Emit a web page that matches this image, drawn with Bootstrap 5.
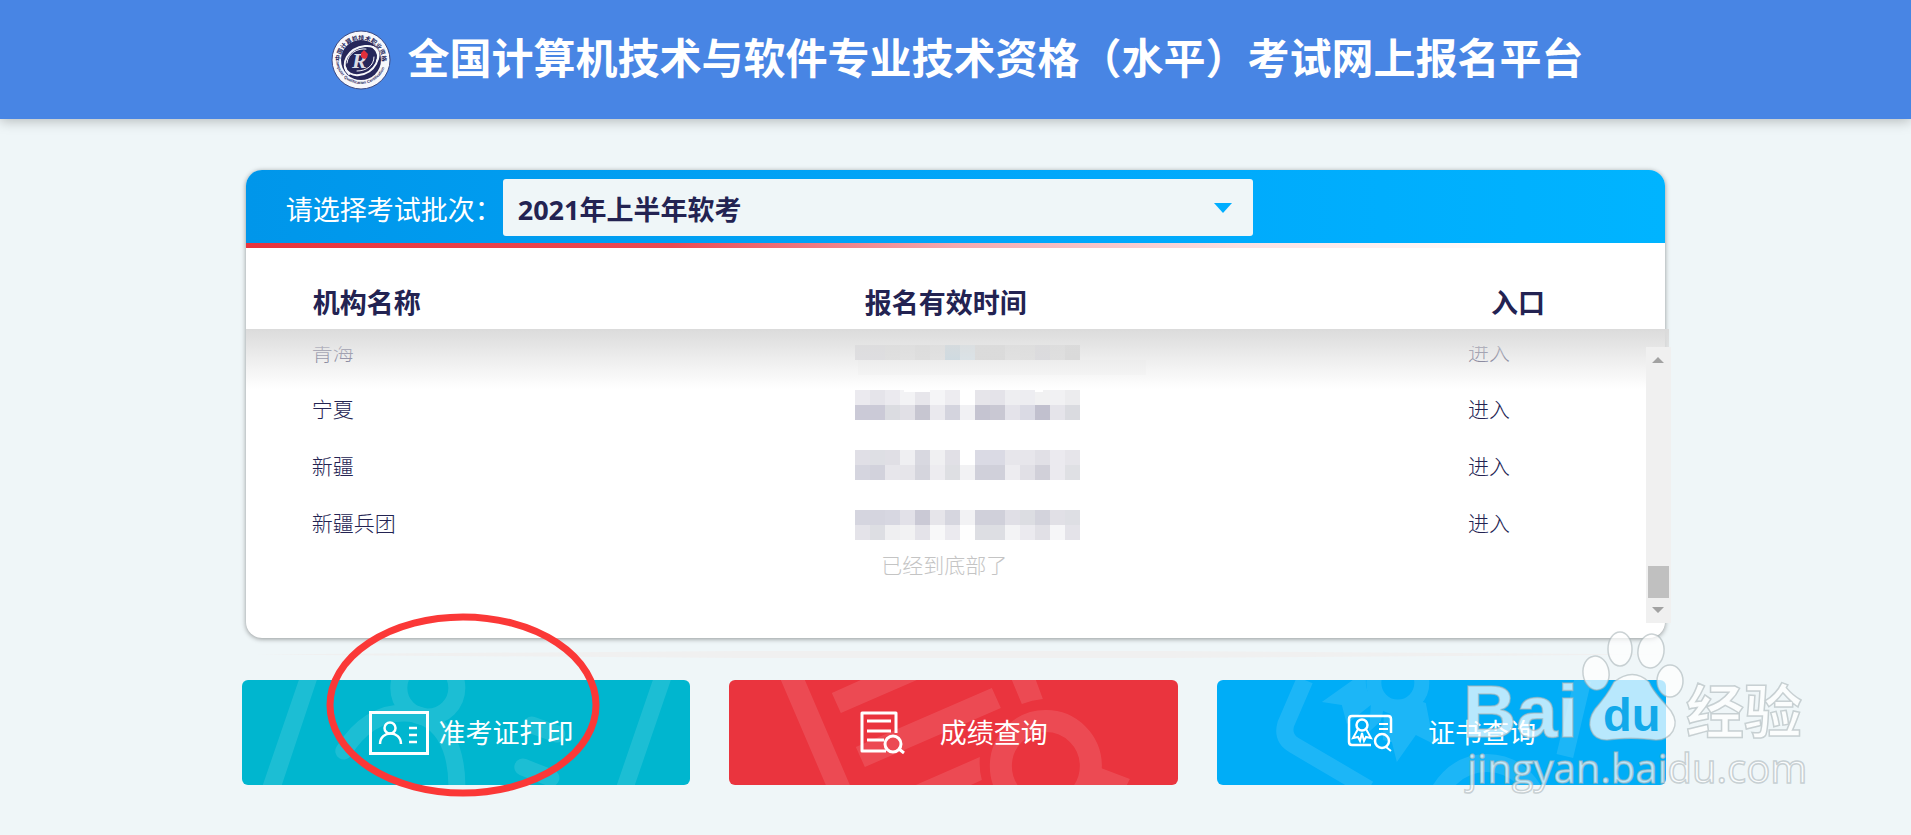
<!DOCTYPE html>
<html lang="zh-CN">
<head>
<meta charset="utf-8">
<meta name="viewport" content="width=device-width, initial-scale=1">
<title>全国计算机技术与软件专业技术资格（水平）考试网上报名平台</title>
<link href="https://cdn.jsdelivr.net/npm/bootstrap@5.3.0/dist/css/bootstrap.min.css" rel="stylesheet">
<style>
  body { background: #eff6f8; color: #232352; font-family: "Open Sans", "Noto Sans CJK SC", sans-serif; }
  .site-header { background: #4885e4; min-height: 119px; box-shadow: 0 2px 12px rgba(0,0,0,.25); }
  .site-title { font-size: 42px; line-height: 56px; font-weight: 700; padding-bottom: 4px; }
  .site-main { width: 75%; max-width: 1424px; margin-left: 12.65%; padding: 51px 0 50px; }
  .batch-panel { margin: 0 1px 0 4px; min-height: 468px; background: #fff; border-radius: 16px; box-shadow: 0 1px 5px rgba(0,0,0,.4); }
  .batch-bar { min-height: 73px; padding: 2px 0 0 40px; background: linear-gradient(90deg, #0096ea, #00a8fb 60%, #00b4ff); border-radius: 16px 16px 0 0; }
  .batch-bar label { width: 217px; padding-top: 4px; font-size: 27px; line-height: 40px; }
  .batch-select { width: 750px; height: 57px; padding: 4px 48px 0 15px; border: 0; border-radius: 3px; color: #232352; font-size: 27px; font-weight: 700; line-height: 40px;
    background-color: #eff6f8; background-position: right 21px center; background-size: 18px 10px;
    background-image: url("data:image/svg+xml,%3Csvg xmlns='http://www.w3.org/2000/svg' viewBox='0 0 18 10'%3E%3Cpath fill='%2300aeff' d='M0 0h18L9 10z'/%3E%3C/svg%3E"); }
  .red-rule { height: 5px; background: linear-gradient(90deg, #e8343c, #ea4a52 30%, #f4a9ae 50%, #fbe0e2 70%, #fff 90%); }
  .org-list { width: calc(100% - 19px); table-layout: fixed; font-size: 21px; line-height: 30px; font-weight: 300; }
  .org-list th { height: 79px; padding: 35px 0 0; font-size: 27px; line-height: 40px; vertical-align: top; }
  .org-list td { height: 57px; padding: 0 0 7px; vertical-align: middle; }
  .org-list .masked { padding: 16px 0 0; vertical-align: top; }
  .org-list a { color: inherit; text-decoration: none; }
  .org-list .first-col { width: 43.5%; padding-left: 66px; }
  .org-list .mid-col { width: 43.8%; }
  .org-list th.first-col { padding-left: 67px; }
  .org-list th.mid-col { padding-left: 10px; }
  .org-list th.last-col { padding-left: 23px; }
  .half-seen { display: block; clip-path: inset(9px 0 0 0); }
  .list-end { width: calc(100% - 22px); margin-top: -2px; color: #c4c4c4; font-size: 21px; line-height: 24px; font-weight: 300; }
  .scroll-shade { left: 0; right: -4px; top: 159px; height: 60px; background: linear-gradient(#dbdbdb, rgba(226,226,226,.6) 50%, rgba(255,255,255,0)); pointer-events: none; }
  .list-scroll { right: -6px; top: 177px; width: 25px; height: 276px; }
  .taper { height: 7px; margin-top: 13px; background: #f0f0f0; clip-path: polygon(0 50%, 35% 0, 65% 0, 100% 50%, 65% 100%, 35% 100%); }
  .entry-row { display: grid; grid-template-columns: repeat(3, 1fr); gap: 39px; margin-top: 22px; }
  .entry { min-height: 105px; color: #fff; font-size: 27px; line-height: 40px; text-decoration: none; border-radius: 6px; }
  .entry:hover { color: #fff; }
  .entry-art { inset: 0; width: 100%; height: 100%; border-radius: 6px; opacity: .11; }
  .teal { background: #00b6cf; padding-left: 10px; gap: 10px; }
  .crimson { background: #ea343e; gap: 35px; }
  .azure { background: #00adf7; gap: 35px; }
  .ring-mark { left: 83px; bottom: 37px; pointer-events: none; z-index: 2; }
  .watermark { right: -157px; bottom: 38px; pointer-events: none; z-index: 3; }
</style>
</head>
<body>
<header class="site-header d-flex align-items-center justify-content-center text-white position-relative ps-1">
  <svg class="flex-shrink-0 me-3" width="60" height="60" viewBox="0 0 60 60" aria-hidden="true">
    <defs>
      <path id="arcTop" d="M9 31A21 21 0 0 1 51 31"/>
      <path id="arcBottom" d="M5 29A25 25 0 0 0 55 29"/>
    </defs>
    <circle cx="30" cy="30" r="29" fill="#f7f7fb" stroke="#3c4a83" stroke-width="1"/>
    <circle cx="30" cy="30" r="20" fill="#26265a"/>
    <g fill="#26265a" font-weight="700">
      <text font-size="6"><textPath href="#arcTop">中国计算机技术职业资格</textPath></text>
      <text font-size="4" font-family="Liberation Sans"><textPath href="#arcBottom">Computer Qualification Certification</textPath></text>
    </g>
    <g fill="none" stroke="#f7f7fb" stroke-linecap="round">
      <path d="M18 44C8 34 17 18 34 16 46 15 50 23 46 31" stroke-width="2"/>
      <path d="M16 33C17 23 27 18 35 19" stroke-width="1"/>
      <path d="M42 17C53 26 44 43 28 45 21 46 15 42 14 37" stroke-width="2"/>
      <path d="M43 27C43 36 35 41 26 41" stroke-width="1"/>
    </g>
    <text x="21" y="38" font-family="Liberation Serif" font-size="22" font-weight="700" font-style="italic" fill="#dadbe6">R</text>
    <path d="M30 23l3-3 2 2 2 2-1 4-3 1-3-2z" fill="#e2303b"/>
  </svg>
  <h1 class="site-title m-0">全国计算机技术与软件专业技术资格（水平）考试网上报名平台</h1>
</header>

<main class="site-main position-relative">
  <section class="batch-panel position-relative">
    <div class="batch-bar d-flex align-items-center text-white">
      <label for="batch">请选择考试批次：</label>
      <select id="batch" class="form-select batch-select"><option>2021年上半年软考</option></select>
    </div>
    <div class="red-rule"></div>
    <table class="org-list">
      <thead>
        <tr><th class="first-col" scope="col">机构名称</th><th class="mid-col" scope="col">报名有效时间</th><th class="last-col" scope="col">入口</th></tr>
      </thead>
      <tbody>
        <tr>
          <td class="first-col"><span class="half-seen">青海</span></td>
          <td class="masked" rowspan="4"><svg id="mosaic" class="d-block" width="300" height="198" viewBox="0 0 300 198" role="img" aria-label="报名有效时间"></svg></td>
          <td><a class="half-seen" href="#">进入</a></td>
        </tr>
        <tr><td class="first-col">宁夏</td><td><a href="#">进入</a></td></tr>
        <tr><td class="first-col">新疆</td><td><a href="#">进入</a></td></tr>
        <tr><td class="first-col">新疆兵团</td><td><a href="#">进入</a></td></tr>
      </tbody>
    </table>
    <div class="list-end text-center">已经到底部了</div>
    <div class="scroll-shade position-absolute"></div>
    <svg class="list-scroll position-absolute" viewBox="0 0 25 276" aria-hidden="true">
      <path fill="#f0f0f0" d="M0 0h25v276H0z"/>
      <path fill="#c0c0c0" d="M2 219h21v32H2z"/>
      <path fill="#a2a2a2" d="M12 10l6 6H6zM12 266l6-6H6z"/>
    </svg>
  </section>

  <div class="taper"></div>

  <nav class="entry-row">
    <a class="entry teal position-relative d-flex align-items-center justify-content-center" href="#">
      <svg class="entry-art position-absolute" viewBox="0 0 449 105" preserveAspectRatio="xMidYMid slice" aria-hidden="true">
        <path fill="#fff" d="M57 0h18L40 105H21zM411 0h18l-36 105h-18z"/>
        <g fill="none" stroke="#fff" stroke-width="17" stroke-linecap="round">
          <circle cx="186" cy="8" r="29"/>
          <path d="M102 71C119 44 140 33 162 33 198 33 216 65 215 110M290 45l25 9M281 87l28 11"/>
        </g>
      </svg>
      <svg class="position-relative" width="60" height="44" viewBox="0 0 60 44" fill="none" stroke="#fff" aria-hidden="true">
        <path stroke-width="3" d="M1.500 1.500h57v41h-57z"/>
        <circle cx="21" cy="17" r="5.500" stroke-width="2.500"/>
        <path stroke-width="2.500" d="M11 33C11 19 32 19 32 33M40 17h8M40 24h8M40 31h8"/>
      </svg>
      <span class="position-relative">准考证打印</span>
    </a>
    <a class="entry crimson position-relative d-flex align-items-center justify-content-center" href="#">
      <svg class="entry-art position-absolute" viewBox="0 0 449 105" preserveAspectRatio="xMidYMid slice" aria-hidden="true">
        <path fill="#fff" d="M52 0h24l45 105H97zM103 13l29-13h56l-76 33zM127 67L263 8l9 20-136 59zM187 105l64-28q-1 12 2 23l-11 5zM283 0h24l7 19q-11 1-21 5zM372 88l29 11-3 6h-33z"/>
        <circle cx="317" cy="86" r="45" fill="none" stroke="#fff" stroke-width="22"/>
      </svg>
      <svg class="position-relative" width="45" height="44" viewBox="0 0 45 44" fill="none" stroke="#fff" aria-hidden="true">
        <path stroke-width="3" stroke-linejoin="round" d="M36 22V2H2v38h24"/>
        <path stroke-width="3" d="M7 10h24M7 20h24M7 29h17M39 38l5 4"/>
        <circle cx="33" cy="33" r="8" stroke-width="3"/>
      </svg>
      <span class="position-relative">成绩查询</span>
    </a>
    <a class="entry azure position-relative d-flex align-items-center justify-content-center" href="#">
      <svg class="entry-art position-absolute" viewBox="0 0 449 105" preserveAspectRatio="xMidYMid slice" aria-hidden="true">
        <path fill="none" stroke="#fff" stroke-width="17" d="M88 0L69 44Q65 58 77 65L152 109M366 0l-18 76"/>
        <path fill="#fff" d="M136 0L105 22l20 3 5 19 24-19-2 27 12-11 4-17q-20-6-19-24zM167 35l-1 25 9 2 5 20 19-27 18 9-8-41-12-4q-11 13-30 16z"/>
        <circle cx="181" cy="3" r="24" fill="none" stroke="#fff" stroke-width="15"/>
        <circle cx="270" cy="136" r="53" fill="none" stroke="#fff" stroke-width="18"/>
      </svg>
      <svg class="position-relative" width="46" height="38" viewBox="0 0 46 38" fill="none" stroke="#fff" aria-hidden="true">
        <path stroke-width="2.500" d="M44 19V5q0-3-3-3H5Q2 2 2 5v23q0 3 3 3h19"/>
        <circle cx="15" cy="11" r="5.500" stroke-width="2.500"/>
        <path stroke-width="2" d="M11 15L6 24l5-1 2 4 2-8 2 8 2-4 5 1-5-9M32 10h9M32 15h9M39 33l5 4"/>
        <circle cx="35" cy="27" r="7" stroke-width="2.500"/>
      </svg>
      <span class="position-relative">证书查询</span>
    </a>
  </nav>

  <svg class="ring-mark position-absolute" width="276" height="186" viewBox="0 0 276 186" aria-hidden="true">
    <ellipse cx="138" cy="93" rx="133" ry="88" fill="none" stroke="#fb3837" stroke-width="7"/>
  </svg>
  <svg class="watermark position-absolute" width="364" height="172" viewBox="0 0 364 172" role="img" aria-label="Baidu 经验">
    <g fill="#fff" fill-opacity=".72" stroke="#a9b4b8" stroke-opacity=".6" stroke-width="1.500">
      <ellipse cx="161" cy="24" rx="12" ry="17"/>
      <ellipse cx="192" cy="26" rx="13" ry="17" transform="rotate(8 192 26)"/>
      <ellipse cx="137" cy="48" rx="13" ry="17" transform="rotate(-8 137 48)"/>
      <ellipse cx="211" cy="56" rx="13" ry="16"/>
      <path d="M155 57Q174 42 190 57C194 67 203 75 212 86 222 101 212 115 197 115 182 113 162 113 148 115 131 115 126 98 136 84 143 76 150 67 155 57z"/>
      <text x="4" y="112" font-family="Liberation Sans" font-size="74" font-weight="700">Bai</text>
      <text x="227" y="108" font-family="Noto Sans CJK SC" font-size="58" font-weight="700">经验</text>
      <text x="8" y="158" font-family="Open Sans" font-size="40">jingyan.baidu.com</text>
    </g>
    <text x="144" y="106" font-family="Liberation Sans" font-size="47" font-weight="700" fill="#12a9ea">du</text>
  </svg>
</main>

<script src="https://cdn.jsdelivr.net/npm/bootstrap@5.3.0/dist/js/bootstrap.bundle.min.js"></script>
<script>
  // Pixelated dates: each entry is [top, fifteen tile colours]
  const tiles = [
    [2, 'd9d8de d9d8de dcdcdc e0e0e0 d8d8d8 e0e0e0 b4cfde d0e2ec d0d0d0 d0d0d0 dedede dcdcdc d2d1d8 dadada cecece'],
    [47, 'ebeaef e5e4ea ebeaef f3f3f5 e7e6eb f5f5f7 edecf0 ffffff e6e5ea e4e3e9 eeeef1 ededf1 f1f1f2 f1f1f3 ececee'],
    [62, 'cbcad7 cbcad7 dbdce1 e1e0e6 c7c6d1 eae9ee d4d4de f1f1f4 c5c4d1 c9c8d3 e4e3ea dadae4 c1c0ce e5e4ea dadbe0'],
    [107, 'e0dfe6 dedfe4 e0dfe5 efeff2 d8d8e0 f0f0f2 e1e0e6 ffffff dadae4 dadae4 e7e6eb e7e6eb e1e0e6 ebeaef e6e5ea'],
    [122, 'd5d5df d2d2dc e7e6eb e6e5ea d5d5dd edecf0 dedfe3 f2f2f4 d0d0da d0d0da edecf0 e1e0e6 d1d0d9 ebeaef dfe0e4'],
    [167, 'd5d5df d5d5df d7d7e1 e2e1e8 cac9d5 e6e5ea d6d6df f2f2f4 d0d0da d0d0da e0dfe6 dcdde2 d3d3dc e1e0e6 dedfe4'],
    [182, 'e4e3e9 dddee3 efeff1 f2f2f3 e4e3e9 f8f8f9 ebeaef fefefe dddee3 dddee3 f3f3f5 ebeaef e1e0e6 f6f6f8 e4e3e9']
  ];
  const ns = 'http://www.w3.org/2000/svg';
  const mosaic = document.getElementById('mosaic');
  function box(x, y, width, height, fill) {
    const r = document.createElementNS(ns, 'rect');
    Object.entries({ x, y, width, height, fill }).forEach(([k, v]) => r.setAttribute(k, v));
    r.setAttribute('shape-rendering', 'crispEdges');
    mosaic.append(r);
  }
  tiles.forEach(([top, colours]) => colours.split(' ').forEach((c, i) => box(i * 15, top, 15, 15, '#' + c)));
  box(3, 17, 288, 15, '#fbfbfb');
  box(49, 45, 26, 4, '#ffffff');
  box(180, 45, 8, 4, '#ffffff');
</script>
</body>
</html>
